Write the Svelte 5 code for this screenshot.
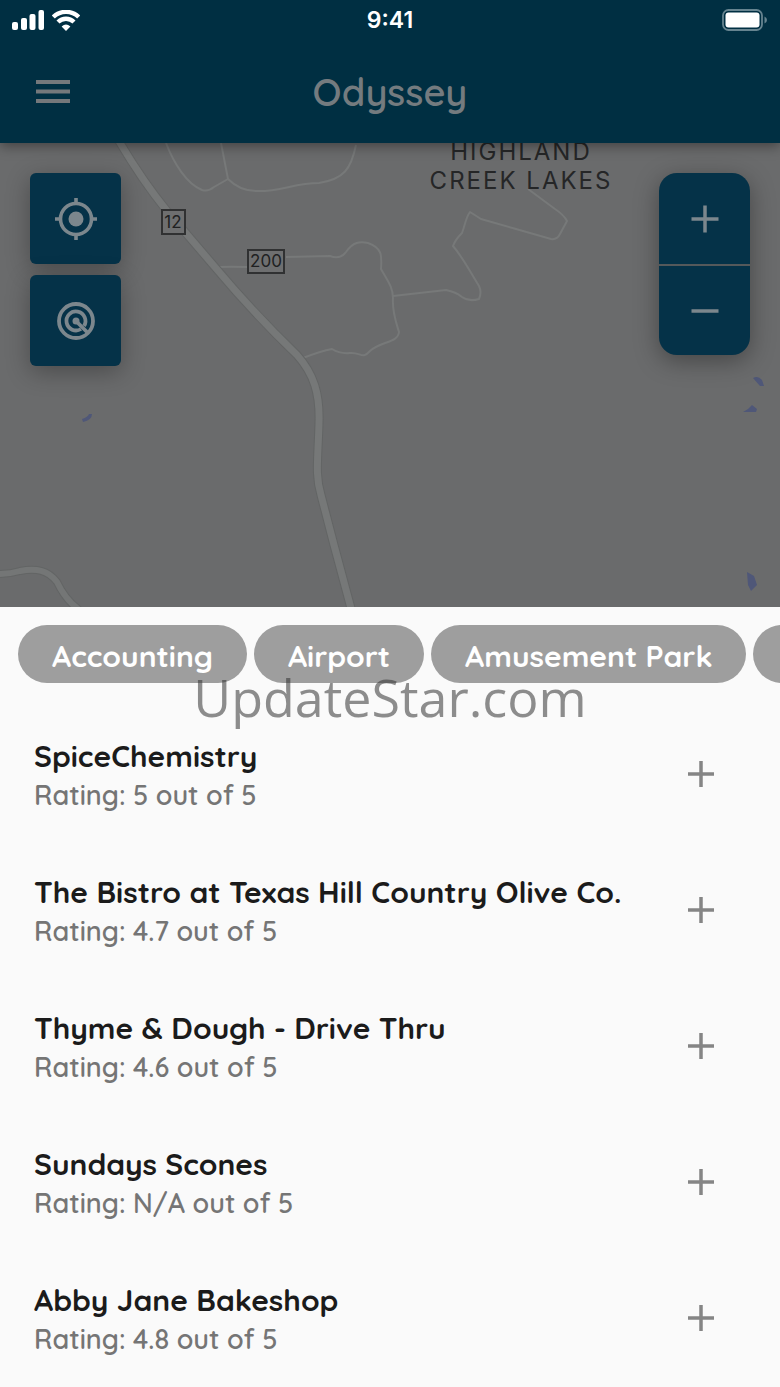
<script>
  const categories = ['Accounting', 'Airport', 'Amusement Park', 'Aquarium'];
  const places = [
    { name: 'SpiceChemistry', rating: '5' },
    { name: 'The Bistro at Texas Hill Country Olive Co.', rating: '4.7' },
    { name: 'Thyme & Dough - Drive Thru', rating: '4.6' },
    { name: 'Sundays Scones', rating: 'N/A' },
    { name: 'Abby Jane Bakeshop', rating: '4.8' }
  ];
</script>

<div class="screen">
  <header>
    <div class="status">
      <div class="signals">
        <svg width="32" height="20" viewBox="0 0 32 20" fill="#fff" aria-hidden="true">
          <rect x="0" y="12" width="6" height="8" rx="2" />
          <rect x="9" y="8" width="6" height="12" rx="2" />
          <rect x="17.500" y="4" width="6" height="16" rx="2" />
          <rect x="26.500" y="0" width="5.500" height="20" rx="2" />
        </svg>
        <svg width="28" height="21" viewBox="0 0 28 21" aria-hidden="true">
          <g fill="none" stroke="#fff" stroke-width="4.400">
            <path d="M1.300 7A18.300 18.300 0 0 1 26.700 7" />
            <path d="M6 12A11.600 11.600 0 0 1 22 12" />
          </g>
          <path d="M9.600 16.500Q14 12.500 18.400 16.500L14 21Z" fill="#fff" />
        </svg>
      </div>
      <span class="time">9:41</span>
      <svg class="battery" width="46" height="22" viewBox="0 0 46 22" aria-hidden="true">
        <rect x="1" y="1" width="39" height="20" rx="5.500" fill="none" stroke="#668490" stroke-width="1.800" />
        <rect x="3.500" y="3.500" width="34" height="15" rx="3" fill="#fff" />
        <path d="M42.500 7.500Q45 8.500 45 11T42.500 14.500Z" fill="#668490" />
      </svg>
    </div>
    <div class="toolbar">
      <button class="menu" aria-label="Menu">
        <svg width="34" height="24" viewBox="0 0 34 24" fill="#74787b"><path d="M0 0h34v4H0zM0 9.500h34v4H0zM0 19h34v4H0z" /></svg>
      </button>
      <h1>Odyssey</h1>
    </div>
  </header>

  <section class="map" aria-label="Map">
    <svg class="terrain" viewBox="0 143 780 464">
      <rect y="143" width="780" height="464" fill="#6a6b6c" />
      <g fill="none" stroke="#777979" stroke-width="2" stroke-linejoin="round">
        <path d="M166 143C174 164 187 184 202 190Q208 192 214 187L228 179L221 143" />
        <path d="M228 179Q240 191 256 191C280 192 294 183 319 183C344 179 351 169 356 145" />
        <path d="M214 268Q219 266 248 267M286 257L330 256Q340 260 346 252C353 242 360 241 368 243C382 248 382 255 381 269C387 280 393 287 393 298C392 312 396 322 399 332C398 343 381 341 370 351C362 360 361 352 350 353Q340 354 332 349Q321 351 303 358" />
        <path d="M393 296L446 290Q456 292 462 297Q469 302 479 299Q482 292 479 286C470 272 464 259 453 246Q455 240 462 233C465 225 466 217 470 212L481 219L516 229L551 239Q557 240 560 234L567 221Q564 215 555 209L528 189" />
      </g>
      <g fill="none" stroke-linecap="round">
        <path d="M116 136Q141 179 167 211L214 266C240 297 270 329 297 355C314 374 320 394 319 423C318 460 315 475 321 495L334 545L352 612" stroke="#636565" stroke-width="9" />
        <path d="M116 136Q141 179 167 211L214 266C240 297 270 329 297 355C314 374 320 394 319 423C318 460 315 475 321 495L334 545L352 612" stroke="#767878" stroke-width="7" />
        <path d="M-3 574Q10 574 20 571C36 568 48 570 57 582Q65 599 78 609" stroke="#636565" stroke-width="8" />
        <path d="M-3 574Q10 574 20 571C36 568 48 570 57 582Q65 599 78 609" stroke="#747676" stroke-width="6" />
      </g>
      <g fill="#4f5778">
        <path d="M82 419Q88 417 89 414H92Q92 420 83 422Z" />
        <path d="M753 378Q758 375 762 380L764 386L760 386Z" />
        <path d="M743 412Q749 409 752 405L757 409L756 412Z" />
        <path d="M747 572L754 576L757 585L751 591L748 585Z" />
      </g>
      <g class="route">
        <rect x="162" y="210" width="23" height="24" />
        <rect x="248" y="250" width="36" height="23" />
        <text x="173" y="228">12</text>
        <text x="266" y="267">200</text>
      </g>
      <g class="region">
        <text x="521" y="160">HIGHLAND</text>
        <text x="521" y="189">CREEK LAKES</text>
      </g>
    </svg>
    <div class="controls">
      <div class="tools">
        <button aria-label="My location">
          <svg width="42" height="42" viewBox="0 0 42 42" fill="none" stroke="#7c878d" stroke-width="3.600">
            <circle cx="21" cy="21" r="15.500" /><circle cx="21" cy="21" r="7.500" fill="#7c878d" stroke="none" />
            <path d="M21 0v6M21 36v6M0 21h6M36 21h6" />
          </svg>
        </button>
        <button aria-label="Search radius">
          <svg width="42" height="42" viewBox="0 0 42 42" fill="none" stroke="#7c878d" stroke-width="3.800">
            <circle cx="21" cy="21" r="17" /><path d="M26 29A9.500 9.500 0 1 1 29 26" />
            <circle cx="21" cy="21" r="3.500" fill="#7c878d" stroke="none" /><path d="M21 21L33 33" />
          </svg>
        </button>
      </div>
      <div class="zoom">
        <button aria-label="Zoom in"><svg width="28" height="28" viewBox="0 0 28 28" stroke="#7c878d" stroke-width="3.500"><path d="M14 0.500v27M0.500 14h27" /></svg></button>
        <button aria-label="Zoom out"><svg width="28" height="28" viewBox="0 0 28 28" stroke="#7c878d" stroke-width="3.500"><path d="M0.500 14h27" /></svg></button>
      </div>
    </div>
  </section>

  <main>
    <nav class="chips" aria-label="Categories">
      {#each categories as category}
        <button>{category}</button>
      {/each}
    </nav>
    <div class="watermark">UpdateStar.com</div>
    <ul>
      {#each places as place}
        <li>
          <div class="place">
            <h2>{place.name}</h2>
            <p>Rating: {place.rating} out of 5</p>
          </div>
          <button class="add" aria-label="Add {place.name}">
            <svg width="26" height="26" viewBox="0 0 26 26" stroke="#858585" stroke-width="3.500"><path d="M13 0v26M0 13h26" /></svg>
          </button>
        </li>
      {/each}
    </ul>
  </main>
</div>

<style>
  :global(body) { margin: 0; background: #fafafa; }
  .screen { min-height: 100vh; overflow: hidden; background: #fafafa; font-family: Quicksand, Lato, sans-serif; }
  button { display: flex; align-items: center; justify-content: center; padding: 0; border: 0; background: none; font: inherit; cursor: pointer; }
  h1, h2, p, ul { margin: 0; padding: 0; }
  svg { display: block; }

  header { position: relative; z-index: 1; background: #002f42; box-shadow: 0 3px 12px rgba(0, 0, 0, 0.4); }
  .status { display: grid; grid-template-columns: 1fr auto 1fr; align-items: center; height: 40px; padding: 0 12px; }
  .signals { display: flex; align-items: center; gap: 8px; }
  .time { color: #fff; font: 600 23px/28px Inter, sans-serif; }
  .battery { justify-self: end; }
  .toolbar { display: grid; grid-template-columns: 1fr auto 1fr; align-items: center; height: 103px; padding: 0 36px; }
  .menu { justify-self: start; }
  h1 { color: #747b7f; font-size: 38px; line-height: 50px; font-weight: 600; }

  .map { position: relative; }
  .terrain { width: 100%; height: auto; }
  .route rect { fill: #6e6f70; stroke: #303132; stroke-width: 2; }
  .route text { fill: #202122; font: 400 17px Inter, sans-serif; text-anchor: middle; }
  .region text { fill: #252627; font: 400 24px Inter, sans-serif; letter-spacing: 2px; text-anchor: middle; }
  .controls { position: absolute; inset: 0; display: flex; justify-content: space-between; align-items: flex-start; padding: 30px; }
  .tools { display: grid; gap: 11px; }
  .tools button { width: 91px; height: 91px; border-radius: 6px; background: #053248; box-shadow: 0 6px 24px rgba(0, 0, 0, 0.3); }
  .zoom { border-radius: 18px; overflow: hidden; background: #053248; box-shadow: 0 6px 24px rgba(0, 0, 0, 0.35); }
  .zoom button { width: 91px; height: 91px; }
  .zoom button + button { border-top: 2px solid #55595b; }

  main { position: relative; }
  .chips { display: flex; gap: 7px; padding: 18px 0 0 18px; overflow: hidden; }
  .chips button { flex: none; height: 58px; padding: 4px 34px 0; border-radius: 29px; background: #9e9e9e; color: #fff; font-size: 30px; line-height: 38px; font-weight: 700; }
  .watermark { position: absolute; top: 58px; left: 0; right: 0; color: rgba(50, 50, 50, 0.55); font: 400 52px/64px "Open Sans", sans-serif; text-align: center; pointer-events: none; }
  ul { padding-top: 23px; list-style: none; }
  li { display: flex; align-items: center; justify-content: space-between; height: 136px; padding: 0 66px 0 34px; box-sizing: border-box; }
  .place { padding-top: 2px; }
  h2 { color: #1b1b1b; font-size: 30px; line-height: 40px; font-weight: 700; }
  p { color: #757575; font-size: 27px; line-height: 38px; font-weight: 600; }
</style>
